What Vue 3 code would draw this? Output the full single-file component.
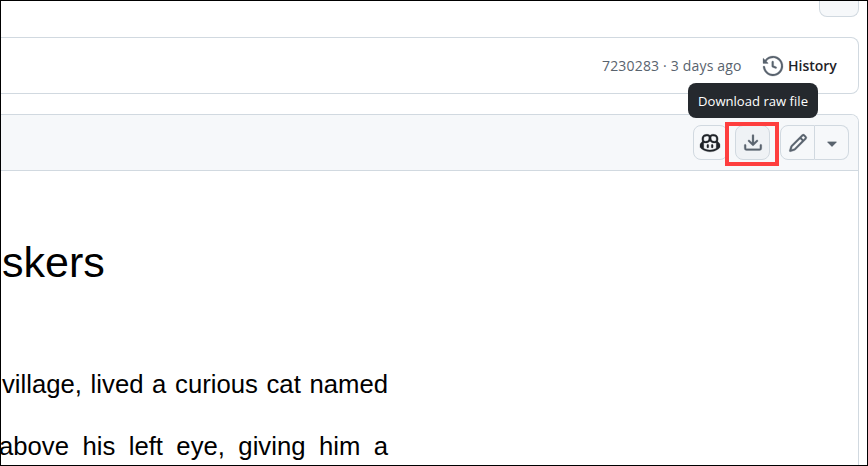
<script setup>
const icons = {
  history: ['m.427 1.927 1.215 1.215a8.002 8.002 0 1 1-1.6 5.685.75.75 0 1 1 1.493-.154 6.5 6.5 0 1 0 1.18-4.458l1.358 1.358A.25.25 0 0 1 3.896 6H.25A.25.25 0 0 1 0 5.75V2.104a.25.25 0 0 1 .427-.177ZM7.75 4a.75.75 0 0 1 .75.75v2.992l2.028.812a.75.75 0 0 1-.557 1.392l-2.5-1A.751.751 0 0 1 7 8.25v-3.5A.75.75 0 0 1 7.75 4Z'],
  copilot: [
    'M7.998 15.035c-4.562 0-7.873-2.914-7.998-3.749V9.338c.085-.628.677-1.686 1.588-2.065.013-.07.024-.143.036-.218.029-.183.06-.384.126-.612-.201-.508-.254-1.084-.254-1.656 0-.87.128-1.769.693-2.484.579-.733 1.494-1.124 2.724-1.261 1.206-.134 2.262.034 2.944.765.05.053.096.108.139.165.044-.057.094-.112.143-.165.682-.731 1.738-.899 2.944-.765 1.23.137 2.145.528 2.724 1.261.566.715.693 1.614.693 2.484 0 .572-.053 1.148-.254 1.656.066.228.098.429.126.612.012.076.024.148.037.218.924.385 1.522 1.471 1.591 2.095v1.872c0 .766-3.351 3.795-8.002 3.795Zm0-1.485c2.28 0 4.584-1.11 5.002-1.433V7.862l-.023-.116c-.49.21-1.075.291-1.727.291-1.146 0-2.059-.327-2.71-.991A3.222 3.222 0 0 1 8 6.303a3.24 3.24 0 0 1-.544.743c-.65.664-1.563.991-2.71.991-.652 0-1.236-.081-1.727-.291l-.023.116v4.255c.419.323 2.722 1.433 5.002 1.433ZM6.762 2.83c-.193-.206-.637-.413-1.682-.297-1.019.113-1.479.404-1.713.7-.247.312-.369.789-.369 1.554 0 .793.129 1.171.308 1.371.162.181.519.379 1.442.379.853 0 1.339-.235 1.638-.54.315-.322.527-.827.617-1.553.117-.935-.037-1.395-.241-1.614Zm4.155-.297c-1.044-.116-1.488.091-1.681.297-.204.219-.359.679-.242 1.614.091.726.303 1.231.618 1.553.299.305.784.54 1.638.54.922 0 1.28-.198 1.442-.379.179-.2.308-.578.308-1.371 0-.765-.123-1.242-.37-1.554-.233-.296-.693-.587-1.713-.7Z',
    'M6.25 9.037a.75.75 0 0 1 .75.75v1.501a.75.75 0 0 1-1.5 0V9.787a.75.75 0 0 1 .75-.75Zm4.25.75v1.501a.75.75 0 0 1-1.5 0V9.787a.75.75 0 0 1 1.5 0Z',
  ],
  download: [
    'M2.75 14A1.75 1.75 0 0 1 1 12.25v-2.5a.75.75 0 0 1 1.5 0v2.5c0 .138.112.25.25.25h10.5a.25.25 0 0 0 .25-.25v-2.5a.75.75 0 0 1 1.5 0v2.5A1.75 1.75 0 0 1 13.25 14Z',
    'M7.25 7.689V2a.75.75 0 0 1 1.5 0v5.689l1.97-1.969a.749.749 0 1 1 1.06 1.06l-3.25 3.25a.749.749 0 0 1-1.06 0L4.22 6.78a.749.749 0 1 1 1.06-1.06l1.97 1.969Z',
  ],
  pencil: ['M11.013 1.427a1.75 1.75 0 0 1 2.474 0l1.086 1.086a1.75 1.75 0 0 1 0 2.474l-8.61 8.61c-.21.21-.47.364-.756.445l-3.251.93a.75.75 0 0 1-.927-.928l.929-3.25c.081-.286.235-.547.445-.758l8.61-8.61Zm.176 4.823L9.75 4.81l-6.286 6.287a.253.253 0 0 0-.064.108l-.558 1.953 1.953-.558a.253.253 0 0 0 .108-.064Zm1.238-3.763a.25.25 0 0 0-.354 0L10.811 3.75l1.439 1.44 1.263-1.263a.25.25 0 0 0 0-.354Z'],
  caret: ['m4.427 7.427 3.396 3.396a.25.25 0 0 0 .354 0l3.396-3.396A.25.25 0 0 0 11.396 7H4.604a.25.25 0 0 0-.177.427Z'],
}
</script>

<template>
  <div class="frame">
    <div class="top"><div class="top-button"></div></div>

    <div class="commit">
      <span class="meta">7230283 · 3 days ago</span>
      <a class="history">
        <svg class="icon" viewBox="0 0 16 16"><path v-for="d in icons.history" :key="d" :d="d" /></svg>
        <span class="history-label">History</span>
      </a>
    </div>

    <section class="file">
      <header class="toolbar">
        <button class="btn copilot">
          <svg class="icon" viewBox="0 0 16 16"><path v-for="d in icons.copilot" :key="d" :d="d" /></svg>
        </button>
        <div class="download-wrap">
          <button class="btn download">
            <svg class="icon" viewBox="0 0 16 16"><path v-for="d in icons.download" :key="d" :d="d" /></svg>
          </button>
          <div class="highlight"></div>
          <div class="tooltip"><span class="tip-text">Download raw file</span></div>
        </div>
        <div class="group">
          <button class="btn edit">
            <svg class="icon" viewBox="0 0 16 16"><path v-for="d in icons.pencil" :key="d" :d="d" /></svg>
          </button>
          <button class="btn more">
            <svg class="icon" viewBox="0 0 16 16"><path v-for="d in icons.caret" :key="d" :d="d" /></svg>
          </button>
        </div>
      </header>
      <article class="document">
        <h1>skers</h1>
        <p class="first">village, lived a curious cat named</p>
        <p class="second">above his left eye, giving him a</p>
      </article>
    </section>
  </div>
</template>

<style>
body { background: #fff; }
</style>

<style scoped>
* { box-sizing: border-box; }
.frame {
  width: 868px;
  height: 466px;
  border: 1px solid #000;
  overflow: hidden;
  background: #fff;
  font-family: "Open Sans", "Noto Sans", sans-serif;
}
.icon {
  width: 20px;
  height: 20px;
  display: block;
  flex: none;
  fill: currentColor;
  stroke: currentColor;
  stroke-width: 0.2;
  overflow: visible;
}
.top { display: flex; justify-content: flex-end; height: 36px; padding-right: 8px; }
.top-button {
  width: 40px;
  height: 16px;
  border: 1px solid #d1d9e0;
  border-top: 0;
  border-radius: 0 0 8px 8px;
  background: #f6f8fa;
}
.commit {
  width: 858px;
  height: 57px;
  border: 1px solid #d1d9e0;
  border-left: 0;
  border-radius: 0 8px 8px 0;
  display: flex;
  align-items: center;
  justify-content: flex-end;
  gap: 21px;
  padding-right: 21px;
  white-space: nowrap;
}
.meta { width: 140px; color: #59636e; font-size: 14px; letter-spacing: 0.18px; }
.history { display: flex; align-items: center; gap: 5px; color: #59636e; }
.history-label { width: 49px; color: #1f2328; font-size: 14px; font-weight: 600; }
.file {
  width: 858px;
  height: 360px;
  margin-top: 20px;
  border: 1px solid #d1d9e0;
  border-left: 0;
  border-radius: 0 8px 0 0;
}
.toolbar {
  height: 56px;
  display: flex;
  align-items: center;
  justify-content: flex-end;
  padding-right: 9px;
  border-bottom: 1px solid #d1d9e0;
  border-radius: 0 7px 0 0;
  background: #f6f8fa;
}
.btn {
  width: 35px;
  height: 35px;
  padding: 0;
  display: flex;
  align-items: center;
  justify-content: center;
  border: 1px solid #d1d9e0;
  border-radius: 8px;
  background: #f6f8fa;
  color: #59636e;
}
.copilot { color: #1f2328; margin-right: 7px; padding-right: 1px; }
.download-wrap { position: relative; margin-right: 10px; }
.download { background: #eff2f5; }
.highlight {
  position: absolute;
  left: -10px;
  top: -3px;
  width: 54px;
  height: 44px;
  border: 4px solid #fe3e3e;
}
.tooltip {
  position: absolute;
  left: -47px;
  top: -42px;
  width: 130px;
  height: 35px;
  border-radius: 8px;
  background: #25292e;
  color: #fff;
  display: flex;
  align-items: center;
  justify-content: center;
  font-size: 13.1px;
  white-space: nowrap;
}
.group { display: flex; }
.edit { border-radius: 8px 0 0 8px; }
.more { width: 34px; border-radius: 0 8px 8px 0; border-left: 0; }
.document {
  width: 387px;
  padding-top: 66px;
  color: #000;
  font-family: "Liberation Sans", Arial, sans-serif;
}
h1 { margin: 0 0 0 1px; font-size: 43px; line-height: 50px; font-weight: 400; }
p {
  margin: 0;
  font-size: 25.7px;
  line-height: 62px;
  white-space: nowrap;
  text-align: justify;
  text-align-last: justify;
}
.first { margin: 66px 0 0 1px; }
.second { margin-left: -2px; }
</style>
